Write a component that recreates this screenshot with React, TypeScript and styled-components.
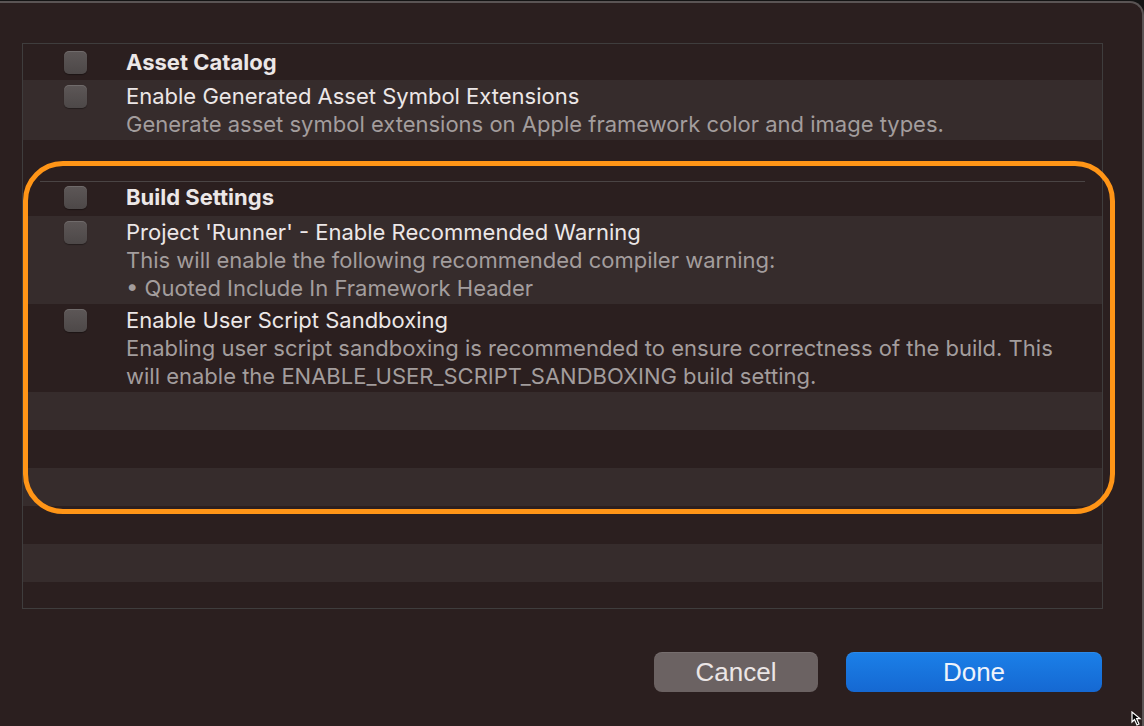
import React from 'react';
import styled, { createGlobalStyle } from 'styled-components';

const GlobalStyle = createGlobalStyle`
    html, body {
        margin: 0;
        padding: 0;
        background: #1c241c;
    }
    * {
        box-sizing: border-box;
    }
`

const Page = styled.div`
    width: 1144px;
    height: 726px;
    padding-top: 1px;
    background: #141414;
    overflow: hidden;
    position: relative;
`

const Window = styled.div`
    height: 725px;
    display: flex;
    flex-direction: column;
    background: #2b1f1f;
    border-top: 2px solid #5a5454;
    border-right: 2px solid #5a5454;
    border-top-right-radius: 14px;
    font-family: Inter, "Noto Sans", sans-serif;
`

const Table = styled.div`
    position: relative;
    margin: 40px 0 0 22px;
    width: 1081px;
    height: 566px;
    border: 1px solid #3f3d3d;
    display: flex;
    flex-direction: column;
    overflow: hidden;
`

const Row = styled.div<{ $shade?: boolean; $height?: number }>`
    display: flex;
    align-items: flex-start;
    flex-shrink: 0;
    padding: 2px 20px 0 41px;
    height: ${p => p.$height ?? 38}px;
    background: ${p => (p.$shade ? '#362c2c' : '#2b1f1f')};
`

const HeaderRow = styled(Row)`
    position: relative;
    align-items: center;
    padding-top: 0;
`

const Divider = styled.div`
    position: absolute;
    top: 3px;
    left: 17px;
    right: 17px;
    height: 1px;
    background: #4a4444;
`

const Filler = styled.div`
    flex: 1;
    background: #2b1f1f;
`

const CheckSlot = styled.div`
    width: 62px;
    height: 28px;
    display: flex;
    align-items: center;
    flex-shrink: 0;
`

const Checkbox = styled.div`
    width: 23px;
    height: 23px;
    border-radius: 5px;
    background: linear-gradient(#5d5757, #4d4848);
    box-shadow: inset 0 1px 0 rgba(255, 255, 255, 0.12), 0 1px 1px rgba(0, 0, 0, 0.35);
`

const TextBlock = styled.div`
    display: flex;
    flex-direction: column;
`

const GroupTitle = styled.div`
    font-size: 22px;
    font-weight: 700;
    color: #ece7e7;
    line-height: 28px;
`

const Title = styled.div`
    font-size: 22px;
    color: #ece7e7;
    line-height: 28px;
`

const Description = styled.div`
    font-size: 22px;
    color: #a39d9d;
    line-height: 28px;
`

const Highlight = styled.div`
    position: absolute;
    left: 0;
    top: 117px;
    width: 1092px;
    height: 353px;
    border: 5px solid #ff9517;
    border-radius: 40px;
    pointer-events: none;
`

const Footer = styled.div`
    display: flex;
    justify-content: flex-end;
    gap: 28px;
    margin-top: 43px;
    padding-right: 40px;
`

const Button = styled.button<{ $primary?: boolean }>`
    height: 40px;
    width: ${p => (p.$primary ? 256 : 164)}px;
    border: none;
    border-radius: 8px;
    font-family: "Liberation Sans", Arial, sans-serif;
    font-size: 26px;
    color: ${p => (p.$primary ? '#eef3fb' : '#ebe6e6')};
    background: ${p => (p.$primary ? 'linear-gradient(#1b80e8, #1568d2)' : '#6b6262')};
    box-shadow: inset 0 1px 0 rgba(255, 255, 255, 0.08);
    padding: 0;
`

const Cursor = styled.svg`
    position: absolute;
    right: 0;
    bottom: 0;
`

const HighlightLayer = styled.div`
    position: absolute;
    left: 23px;
    top: 44px;
`

type Item = { title: string; lines: string[]; shade: boolean; height: number };

const assetItems: Item[] = [
    {
        title: 'Enable Generated Asset Symbol Extensions',
        lines: ['Generate asset symbol extensions on Apple framework color and image types.'],
        shade: true,
        height: 60,
    },
];

const buildItems: Item[] = [
    {
        title: "Project 'Runner' - Enable Recommended Warning",
        lines: [
            'This will enable the following recommended compiler warning:',
            '• Quoted Include In Framework Header',
        ],
        shade: true,
        height: 88,
    },
    {
        title: 'Enable User Script Sandboxing',
        lines: [
            'Enabling user script sandboxing is recommended to ensure correctness of the build. This',
            'will enable the ENABLE_USER_SCRIPT_SANDBOXING build setting.',
        ],
        shade: false,
        height: 88,
    },
];

const SettingRow = ({ item }: { item: Item }) => (
    <Row $shade={item.shade} $height={item.height}>
        <CheckSlot>
            <Checkbox />
        </CheckSlot>
        <TextBlock>
            <Title>{item.title}</Title>
            {item.lines.map(l => (
                <Description key={l}>{l}</Description>
            ))}
        </TextBlock>
    </Row>
)

export default function App() {
    const stripes = [true, false, true, false, true];
    return (
        <Page>
            <GlobalStyle />
            <Window>
                <Table>
                    <HeaderRow $height={36}>
                        <CheckSlot>
                            <Checkbox />
                        </CheckSlot>
                        <GroupTitle>Asset Catalog</GroupTitle>
                    </HeaderRow>
                    {assetItems.map(i => (
                        <SettingRow key={i.title} item={i} />
                    ))}
                    <Row />
                    <HeaderRow>
                        <Divider />
                        <CheckSlot>
                            <Checkbox />
                        </CheckSlot>
                        <GroupTitle>Build Settings</GroupTitle>
                    </HeaderRow>
                    {buildItems.map(i => (
                        <SettingRow key={i.title} item={i} />
                    ))}
                    {stripes.map((s, idx) => (
                        <Row key={idx} $shade={s} />
                    ))}
                    <Filler />
                </Table>
                <Footer>
                    <Button>Cancel</Button>
                    <Button $primary>Done</Button>
                </Footer>
            </Window>
            <HighlightLayer>
                <Highlight />
            </HighlightLayer>
            <Cursor width="13" height="15" viewBox="0 0 13 15">
                <path d="M1 1 L1 11 L3.5 8.5 L6 14 L8 13 L5.6 7.6 L9 7.6 Z" fill="#000" stroke="#fff" strokeWidth="1.2" />
            </Cursor>
        </Page>
    )
}
